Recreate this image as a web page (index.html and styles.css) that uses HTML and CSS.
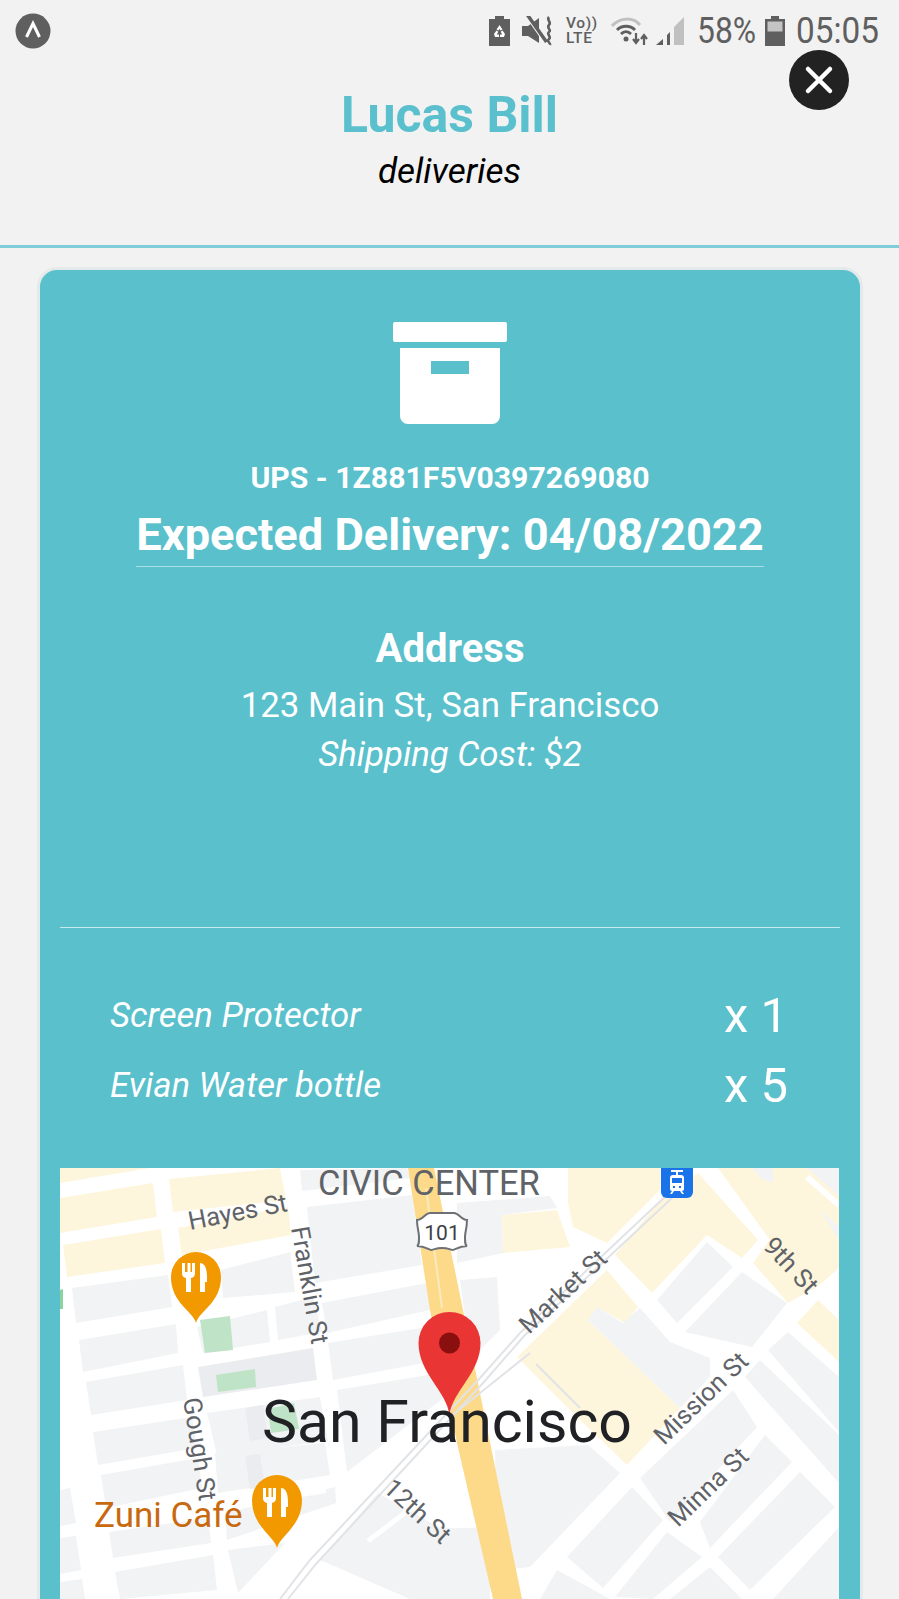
FILE: index.html
```html
<!DOCTYPE html>
<html lang="en">
<head>
<meta charset="utf-8">
<title>Lucas Bill deliveries</title>
<link rel="stylesheet" href="styles.css">
</head>
<body>
<div class="screen">
  <div class="status">
    <svg class="notif" viewBox="0 0 36 36"><circle cx="18" cy="18" r="17.5" fill="#5f5f5f"/><path d="M11.5 24 18 10.5 24.500 24" fill="none" stroke="#fff" stroke-width="3"/></svg>
    <div class="status-right">
      <svg class="si si-saver" viewBox="0 0 21 30"><path d="M6 0h9v3h6v27H0V3h6z" fill="#5f5f5f"/><path d="M10.500 9l3 4.500-2 1-1-1.700-1 1.700-2-1zM5 18l2.500-3.500 1.800 1.200L7.800 18.500h2.200v2.500H6zM16 18l-2.500-3.500-1.800 1.200 1.500 2.800H11v2.500h4z" fill="#fff"/></svg>
      <svg class="si si-mute" viewBox="0 0 32 30"><path d="M0 10h6l11-8v25L6 20H0z" fill="#5f5f5f"/><path d="M4 0l19 27" stroke="#f2f2f2" stroke-width="2"/><path d="M5.500-1l19 27" stroke="#5f5f5f" stroke-width="3.500"/><path d="M27 1c-3 3 3 5 0 8s3 5 0 7 3 5 0 7 2 4 1 6" fill="none" stroke="#5f5f5f" stroke-width="2.600"/></svg>
      <div class="volte"><span>Vo))</span><span>LTE</span></div>
      <svg class="si si-wifi" viewBox="0 0 38 30"><path d="M1 10C9 1 22 1 29 9" fill="none" stroke="#c0c0c0" stroke-width="3"/><path d="M6 14c5-5 13-5 18 0" fill="none" stroke="#5f5f5f" stroke-width="3"/><path d="M10 18c3-3 7-3 10 0" fill="none" stroke="#5f5f5f" stroke-width="3"/><circle cx="15" cy="23" r="2.500" fill="#5f5f5f"/><path d="M25 17v9m-3-3 3 4 3-4M33 29v-9m-3 3 3-4 3 4" fill="none" stroke="#5f5f5f" stroke-width="2.200"/></svg>
      <svg class="si si-signal" viewBox="0 0 28 30"><path d="M0 29l7-6v6z" fill="#5f5f5f"/><path d="M11 19l3-3v13h-3z" fill="#5f5f5f"/><path d="M18 11L28 1v28H18z" fill="#c0c0c0"/></svg>
      <span class="st-text st-pct">58%</span>
      <svg class="si si-batt" viewBox="0 0 20 30"><path d="M6 0h8v3h6v27H0V3h6z" fill="#5f5f5f"/><rect x="2.500" y="5.500" width="15" height="10" fill="#c4c4c4"/></svg>
      <span class="st-text st-time">05:05</span>
    </div>
  </div>

  <button class="close" type="button" aria-label="Close">
    <svg viewBox="0 0 60 60"><path d="M19 19l22 22M41 19 19 41" stroke="#fff" stroke-width="4.500" stroke-linecap="round"/></svg>
  </button>

  <header class="head">
    <h1 class="title">Lucas Bill</h1>
    <p class="sub">deliveries</p>
  </header>

  <section class="card">
    <svg class="box" viewBox="0 0 114 102"><rect width="114" height="20" rx="2" fill="#fff"/><path d="M7 26h100v68a8 8 0 0 1-8 8H15a8 8 0 0 1-8-8z" fill="#fff"/><rect x="38" y="39" width="38" height="13" fill="#5ac0cc"/></svg>
    <p class="track">UPS - 1Z881F5V0397269080</p>
    <h2 class="eta">Expected Delivery: 04/08/2022</h2>
    <h3 class="addr-h">Address</h3>
    <p class="addr">123 Main St, San Francisco</p>
    <p class="cost">Shipping Cost: $2</p>
    <hr class="rule">
    <ul class="items">
      <li class="item"><span class="item-name">Screen Protector</span><span class="item-qty">x 1</span></li>
      <li class="item"><span class="item-name">Evian Water bottle</span><span class="item-qty">x 5</span></li>
    </ul>
    <svg class="map" viewBox="0 0 779 431" width="779" height="431">
      <rect width="779" height="431" fill="#fff"/>
      <g fill="#fdf6dd">
        <path d="M0 0h90L0 15zM0 30l93-15 4 34-97 16zM3 77l98-16 4 34-98 14zM109 11 220 0l6 32-113 12zM118 60l110-21 3 28-109 20z"/>
        <path d="M508 0h92v22l-53 53-34-16-5-24zM442 47l55-5 13 37-67 6zM555 87l48-58 35-24 60 67-16 18-35-23-55 58zM658 0h121v100l-22 19-29 16-35-40 17-23zM737 155l21-23 21 20v42zM547 102l31 37-13 16-28-16-9 13 92 88-53 57-47-45-63-63z"/>
      </g>
      <g fill="#f1f3f4">
        <path d="M12 120l96-13 4 32-96 16zM19 172l97-16 2 29-95 19zM26 214l97-17 4 35-96 15zM33 264l99-15 5 31-99 17zM41 307l97-17 4 30-96 20zM49 364l99-14 3 25-98 15zM55 404l98-17 4 35-97 9zM0 322l10-2 6 35-16 3zM0 370l16-2 5 34-21 4zM0 414l22-3 3 20H0z"/>
        <path d="M161 102l69-18 5 40-72 6zM137 159l70-17 3 32-67 11zM215 139l38-10 9 35-44 8zM247 39l105-12 10 70-107 18zM262 135l105-20 3 27-103 23zM268 175l99-16 13 33-107 20zM277 222l103-17 10 20-103 79zM147 245l113-16 8 44-111 14zM155 285l110-10 5 32-112 18zM165 345l110-26 1 16-109 37zM168 382l57-7-47 50zM240 2l107-2 3 10-108 13z"/>
        <path d="M397 35l93-7 7 12-55 7 1 38-46 10zM400 112l37-3 3 53-17 17-11 20zM597 132l50-58 26 25-56 56zM625 164l57-60 45 31-35 44zM528 152l9-13 26 16 17-15 30 34 40 16v19l-30 31zM708 182l20-18 51 45v55zM685 209l15-17 79 75v48zM580 310l93-88 24 37-87 95zM640 354l65-87 27 27-82 86zM658 389l82-85 35 35-85 83zM507 389l65-70 31 33-60 68zM555 429l52-65 35 25-49 42zM480 431l17-29 53 29zM610 431l40-32 32 32zM713 431l66-72v72zM435 282l93-5 32 28-90 94-33 3zM260 392l58-67 62 35h50v71h-80z"/>
        <path d="M693 0h20v15l-13-5zM747 0h32v28zM760 42l19 17v13z"/>
      </g>
      <path d="M156 340l110-18M747 9l32 28" stroke="#fff" stroke-width="6" fill="none"/>
      <g fill="#eaecef">
        <path d="M138 199l115-19 4 32-114 17zM185 240l18-3 5 33-18 3zM185 288l15-2 5 33-15 2z"/>
      </g>
      <g fill="#bfe3c6">
        <path d="M140 152l30-4 3 34-28 3zM156 207l39-6 1 18-38 5zM208 241l26-6 5 26-28 4z"/>
      </g>
      <path d="M0 122l3-1v20H0z" fill="#8cd3a0"/>
      <path d="M348 0h26l88 431h-29L397 275 370 142z" fill="#fdd98a"/>
      <path d="M366 20l16 120" stroke="#fbeabd" stroke-width="2" fill="none"/>
      <path d="M608 26 460 165 420 210 250 392l-30 39M612 30 464 168 424 214 256 396l-28 35" stroke="#e1e3e6" stroke-width="2" fill="none"/>
      <path d="M476 196 520 240M395 245l75-60" stroke="#e1e3e6" stroke-width="2" fill="none"/>
      <path d="M308 373l42-32" stroke="#fff" stroke-width="5" fill="none"/>
      <g class="lbl">
        <text class="t-civic" x="258" y="27">CIVIC CENTER</text>
        <text class="t-st" transform="translate(130 62) rotate(-11)">Hayes St</text>
        <text class="t-st" transform="translate(231 60) rotate(80)">Franklin St</text>
        <text class="t-st" transform="translate(123 231) rotate(81)">Gough St</text>
        <text class="t-st" transform="translate(322 322) rotate(43)">12th St</text>
        <text class="t-st" transform="translate(469 167) rotate(-43)">Market St</text>
        <text class="t-st" transform="translate(604 278) rotate(-44)">Mission St</text>
        <text class="t-st" transform="translate(618 360) rotate(-44)">Minna St</text>
        <text class="t-st" transform="translate(702 79) rotate(47)">9th St</text>
      </g>
      <path d="M357 52c6 0 8-7 13-7h24c5 0 7 7 13 7 0 8-2 12-2 17 0 6 0 8 2 9-8 0-12 4-14 4-2 0-5-2-11-2-6 0-9 2-11 2-2 0-6-4-14-4 2-1 2-3 2-9 0-5-2-9-2-17z" fill="#fff" stroke="#6d7175" stroke-width="2"/>
      <text class="t-shield" x="382" y="72">101</text>
      <path d="M601 0h32v24a6 6 0 0 1-6 6h-20a6 6 0 0 1-6-6z" fill="#1a73e8"/>
      <path d="M611 2h12v2h-5v3h3a3 3 0 0 1 3 3v11a2 2 0 0 1-2 2l2 3h-2l-2-3h-6l-2 3h-2l2-3a2 2 0 0 1-2-2V10a3 3 0 0 1 3-3h3V4h-5zm1 8v5h10v-5zm1 8v2h2v-2zm6 0v2h2v-2z" fill="#fff"/>
      <path d="M136 155c-3-12-25-20-25-46a25 25 0 0 1 50 0c0 26-22 34-25 46z" fill="#f29900"/>
      <path d="M122 95v10a5 5 0 0 0 4 5v14h5v-14a5 5 0 0 0 4-5V95h-3v9h-1.500v-9h-3v9H125v-9zM140 124V95c5 0 7 6 7 14v5h-2v10z" fill="#fff"/>
      <path d="M217 380c-3-12-25-22-25-48a25 25 0 0 1 50 0c0 26-22 36-25 48z" fill="#f29900"/>
      <path d="M203 320v10a5 5 0 0 0 4 5v14h5v-14a5 5 0 0 0 4-5v-10h-3v9h-1.500v-9h-3v9H206v-9zM221 349v-29c5 0 7 6 7 14v5h-2v10z" fill="#fff"/>
      <text class="t-zuni" x="34" y="359">Zuni Café</text>
      <path d="M389.500 247c-3-24-31-42-31-72a31 31 0 0 1 62 0c0 30-28 48-31 72z" fill="#ea3535"/>
      <circle cx="389.500" cy="175" r="10.500" fill="#8a1010"/>
      <text class="t-city" x="202" y="274">San Francisco</text>
    </svg>
  </section>
</div>
</body>
</html>
```
FILE: styles.css
```css
* { box-sizing: border-box; }
html, body { margin: 0; height: 1599px; overflow: hidden; }
body { background: #f2f2f2; font-family: Roboto, "Liberation Sans", sans-serif; }
.screen { position: relative; width: 899px; height: 1599px; overflow: hidden; }

.status { display: flex; justify-content: space-between; align-items: center; height: 60px; padding: 1px 23px 0 15px; }
.notif { width: 36px; height: 36px; display: block; }
.status-right { display: flex; align-items: center; height: 30px; }
.si { display: block; height: 30px; }
.si-saver { width: 21px; margin-right: 12px; }
.si-mute { width: 32px; margin-right: 12px; }
.si-wifi { width: 38px; margin-right: 7px; }
.si-signal { width: 28px; margin-right: 13px; }
.si-batt { width: 20px; margin-right: 11px; }
.volte { display: flex; flex-direction: column; width: 30px; margin-right: 15px; color: #5f5f5f; font-size: 15.500px; letter-spacing: .6px; line-height: 15px; font-weight: 500; white-space: nowrap; }
.st-text { display: block; color: #5f5f5f; font-size: 37px; line-height: 40px; transform-origin: left center; white-space: nowrap; }
.st-pct { width: 57px; margin-right: 11px; transform: scaleX(.86); }
.st-time { width: 80px; transform: scaleX(.9); }

.close { position: absolute; left: 789px; top: 50px; width: 60px; height: 60px; padding: 0; border: 0; border-radius: 50%; background: #222; }
.close svg { display: block; width: 60px; height: 60px; }

.head { height: 188px; border-bottom: 3px solid #7fcdd8; text-align: center; padding-top: 26px; }
.title { margin: 0; color: #5bc0cd; font-size: 50px; line-height: 58px; font-weight: 700; }
.sub { margin: 8px 0 0; color: #000; font-size: 35px; line-height: 40px; font-style: italic; }

.card { margin: 19px 36px 0 37px; height: 1400px; padding: 52px 20px 0; background: #5ac0cc; border: 3px solid #e4e9ea; border-radius: 20px; color: #fff; text-align: center; }
.box { display: block; width: 114px; height: 102px; margin: 0 auto; }
.track { margin: 37.500px 0 0; font-size: 30.200px; line-height: 32px; font-weight: 700; }
.eta { margin: 16.500px 76px 0; padding-bottom: 6px; border-bottom: 1px solid #a9e0e6; font-size: 45.200px; line-height: 50px; font-weight: 700; white-space: nowrap; }
.addr-h { margin: 60px 0 0; font-size: 40px; line-height: 44px; font-weight: 700; }
.addr { margin: 12px 0 0; font-size: 34.800px; line-height: 44px; font-weight: 400; }
.cost { margin: 5px 0 0; font-size: 34.800px; line-height: 44px; font-style: italic; font-weight: 400; }
.rule { margin: 151px 0 0; border: 0; border-top: 1px solid #c6eaee; height: 0; }
.items { list-style: none; margin: 52px 0 0; padding: 0 50px; text-align: left; }
.item { display: flex; justify-content: space-between; align-items: center; height: 70px; }
.item-name { font-size: 34.700px; font-style: italic; font-weight: 400; }
.item-qty { width: 66px; font-size: 49px; font-weight: 400; white-space: nowrap; }
.map { display: block; margin-top: 48px; }

.lbl text { fill: #5f6368; }
.t-civic { font-size: 34.500px; }
.t-st { font-size: 25.500px; }
.t-shield { font-size: 21px; fill: #3c4043; text-anchor: middle; }
.t-zuni { font-size: 35px; fill: #c8690f; }
.t-city { font-size: 59px; fill: #202124; }
```
